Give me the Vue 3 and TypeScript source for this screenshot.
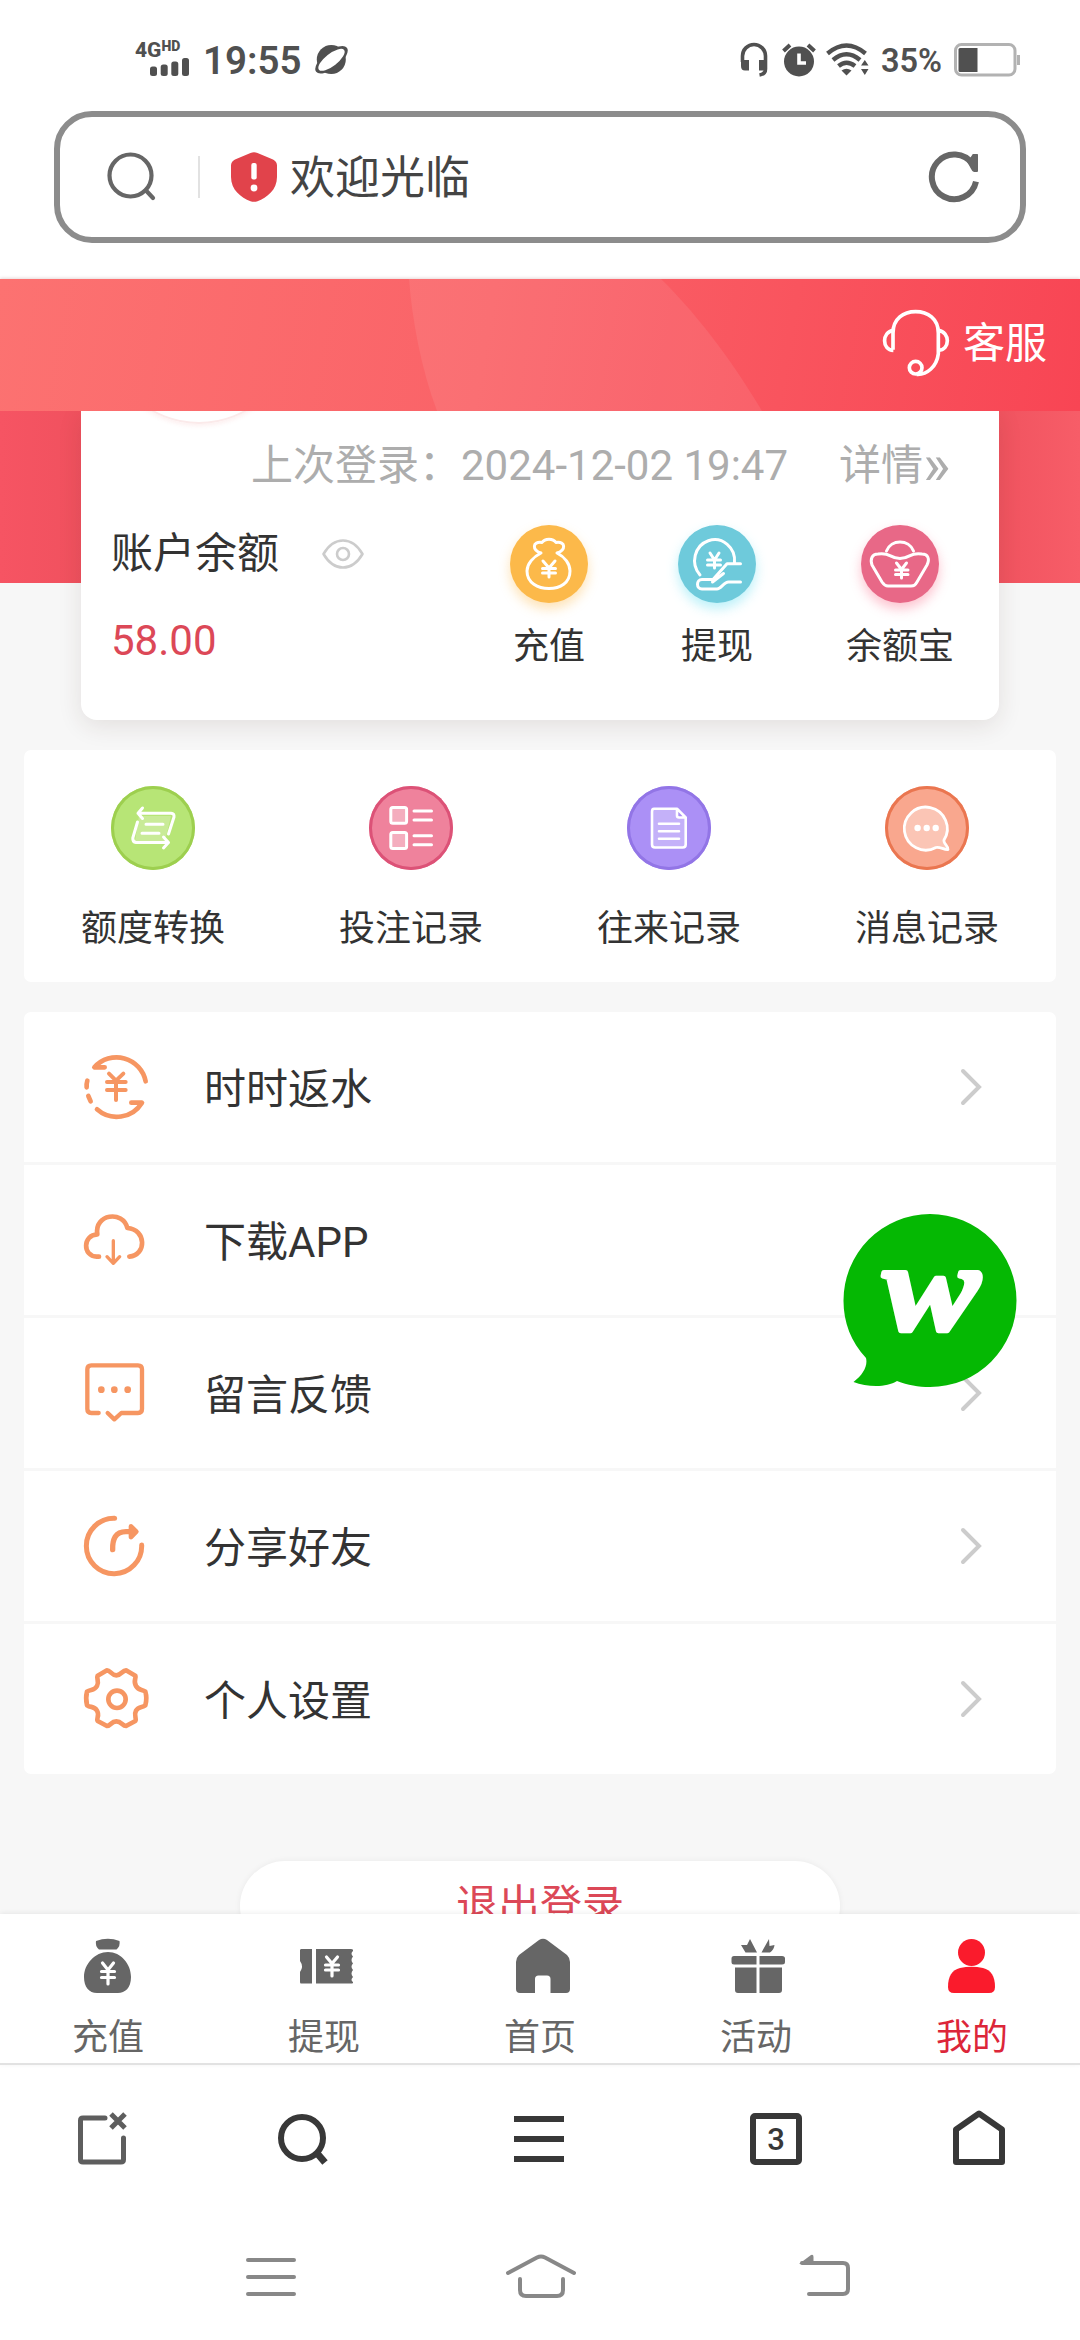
<script setup lang="ts">
interface Item {
  label: string
  icon: string
}

const cardActions: Item[] = [
  { label: '充值', icon: 'bag' },
  { label: '提现', icon: 'hand' },
  { label: '余额宝', icon: 'ingot' },
]

const records: Item[] = [
  { label: '额度转换', icon: 'swap' },
  { label: '投注记录', icon: 'bets' },
  { label: '往来记录', icon: 'doc' },
  { label: '消息记录', icon: 'msg' },
]

const menu: Item[] = [
  { label: '时时返水', icon: 'rebate' },
  { label: '下载APP', icon: 'cloud' },
  { label: '留言反馈', icon: 'feedback' },
  { label: '分享好友', icon: 'share' },
  { label: '个人设置', icon: 'gear' },
]

const tabs: Item[] = [
  { label: '充值', icon: 'bag' },
  { label: '提现', icon: 'ticket' },
  { label: '首页', icon: 'home' },
  { label: '活动', icon: 'gift' },
  { label: '我的', icon: 'user' },
]
</script>

<template>
  <div class="screen">
    <header class="status">
      <div class="signal">
        <div class="network">4G<sup>HD</sup></div>
        <svg width="40" height="20" viewBox="0 0 40 20" fill="#505050">
          <rect x="0" y="10.500" width="7" height="9.500" rx="2.500" />
          <rect x="10.700" y="8.500" width="7" height="11.500" rx="2.500" />
          <rect x="21.300" y="5.500" width="7" height="14.500" rx="2.500" />
          <rect x="32" y="2" width="7" height="18" rx="2.500" />
        </svg>
      </div>
      <span class="time">19:55</span>
      <svg class="planet" width="36" height="36" viewBox="0 0 36 36">
        <circle cx="18.300" cy="17.500" r="14.500" fill="#505050" />
        <ellipse cx="18.500" cy="17.800" rx="19.500" ry="8.500" transform="rotate(-38 18.500 17.800)" fill="#505050" />
        <ellipse cx="18.500" cy="17.800" rx="16" ry="6.200" transform="rotate(-38 18.500 17.800)" fill="#fff" />
      </svg>
      <span class="grow"></span>
      <svg class="phones" width="30" height="36" viewBox="0 0 30 36">
        <path d="M3.500 20 V14 A11.500 11.500 0 0 1 26.500 14 V27 Q26.500 32 20.500 33" fill="none" stroke="#505050" stroke-width="3.600" />
        <path d="M2 18 H10 V28.500 H6 Q2 28.500 2 24 Z M20 18 H28 V28.500 H20 Z" fill="#505050" />
      </svg>
      <svg class="alarm" width="34" height="36" viewBox="0 0 34 36">
        <circle cx="17" cy="19.500" r="15" fill="#505050" />
        <path d="M1.500 9 L8 3 M32.500 9 L26 3" stroke="#505050" stroke-width="4" />
        <path d="M17 11.500 V21 H24" fill="none" stroke="#fff" stroke-width="3.600" />
      </svg>
      <svg class="wifi" width="43" height="36" viewBox="0 0 43 36" fill="none" stroke="#505050" stroke-width="4.400">
        <path d="M1.500 11.500 Q20.500 -4.500 39.500 11.500" />
        <path d="M7 18 Q20.500 6.500 34 18" />
        <path d="M12.500 24 Q20.500 17.500 29 24" />
        <path d="M15.500 28.500 Q20.500 25 25.500 28.500 L20.500 33.500 Z" fill="#505050" stroke="none" />
        <path d="M35 23.500 L38.800 18 L42.500 23.500 Z M35 27 L38.800 33 L42.500 27 Z" fill="#505050" stroke="none" />
      </svg>
      <span class="percent">35%</span>
      <svg class="battery" width="68" height="34" viewBox="0 0 68 34">
        <rect x="1.500" y="1.500" width="59.500" height="30.500" rx="6" fill="#fff" stroke="#b2b2b2" stroke-width="3" />
        <path d="M63 12 H66 V22 H63 Z" fill="#b2b2b2" />
        <path d="M6 5 H23.500 V29 H6 Q4.500 29 4.500 27.500 V6.500 Q4.500 5 6 5 Z" fill="#505050" />
      </svg>
    </header>

    <div class="address-wrap">
      <div class="address">
        <svg width="50" height="50" viewBox="0 0 50 50" fill="none" stroke="#666" stroke-width="4.200" stroke-linecap="round">
          <circle cx="23.500" cy="23.500" r="21" /><path d="M39.500 39 L46 46" />
        </svg>
        <i class="divider"></i>
        <svg class="shield" width="46" height="50" viewBox="0 0 46 50">
          <path d="M19.500 1 Q23 -.5 26.500 1 L42 7.500 Q46 9.500 46 13.500 V25 C46 38 36 45.500 26.500 49.200 Q23 50.500 19.500 49.200 C10 45.500 0 38 0 25 V13.500 Q0 9.500 4 7.500 Z" fill="#e1434b" />
          <rect x="20.300" y="11" width="5.400" height="16.500" rx="2" fill="#fff" /><circle cx="23" cy="36" r="3.400" fill="#fff" />
        </svg>
        <span class="site">欢迎光临</span>
        <svg class="reload" width="56" height="56" viewBox="438 147 168 168">
          <path d="M588 245 A67 67 0 1 1 578 193" fill="none" stroke="#666" stroke-width="18" />
          <path d="M577 164 Q577 162 579 162 H592 Q594 162 594 164 V213 Q594 216 591 216 H582 Q577 216 572 205 L562 186 Z" fill="#666" />
        </svg>
      </div>
    </div>

    <div class="topbar">
      <svg class="wave" width="1080" height="132" viewBox="0 0 1080 132">
        <path d="M409 0 C412 40 421 90 437 132 L762 132 C737 90 702 40 661 0 Z" fill="#fff" fill-opacity=".08" />
      </svg>
      <svg class="support" width="72" height="72" viewBox="300 620 216 216" fill="none" stroke="#fff" stroke-width="11">
        <path d="M339 748 V698 C339 655 371 634 407 634 S475 655 475 698 V760 C470 800 440 824 410 822" />
        <path d="M340 690 C305 694 305 750 340 750 M475 690 C511 694 511 750 475 750" />
        <circle cx="407" cy="802" r="19" />
      </svg>
      <span>客服</span>
    </div>

    <main class="content">
      <section class="account">
        <div class="login">
          <span>上次登录：2024-12-02 19:47</span><span class="more">详情<span class="raquo">»</span></span>
        </div>
        <div class="account-body">
          <div class="balance">
            <div class="balance-title">
              账户余额
              <svg width="44" height="32" viewBox="0 0 44 32" fill="none" stroke="#ccc" stroke-width="2.600">
                <path d="M2.500 16 C13 -2 31 -2 41.500 16 C31 34 13 34 2.500 16 Z" stroke-linejoin="round" />
                <circle cx="22" cy="16" r="6" />
              </svg>
            </div>
            <div class="amount">58.00</div>
          </div>
          <div v-for="a in cardActions" :key="a.label" class="action" :class="a.icon">
            <svg class="disc" width="78" height="78" viewBox="0 0 78 78" fill="none" stroke="#fff" stroke-width="3" stroke-linecap="round" stroke-linejoin="round">
              <template v-if="a.icon === 'bag'">
                <path d="M31 28 C22 25 22 16 32 17.500 C35 13 43 13 46 17.500 C56 16 56 25 47 28 C55 32 60 39 60 46 C60 58 50 63.500 39 63.500 S17 58 17 46 C17 39 23 32 31 28 Z" />
                <path d="M33 36 L39 43 L45 36 M39 43 V52 M32.500 43.500 H45.500 M32.500 48 H45.500" />
              </template>
              <template v-else-if="a.icon === 'hand'">
                <path d="M22 50 A20 21 0 1 1 56.500 38" />
                <path d="M32 28 L36.500 35 L41 28 M36.500 35 V43 M29.500 35 H42.500 M29.500 40 H42.500" />
                <path d="M62.500 38.700 H49 L35 54.500 M45.500 48.500 L34.500 57 M36 54.500 H24 C18 54.500 18 64 24 64 H39 C43 64 46 57 50.500 57 H62.500" />
              </template>
              <template v-else>
                <path d="M25.500 26 C30 14 48 14 52.500 26" />
                <path d="M17 29 C30 27 28 33.500 39 33.500 S48 27 61 29 C67 29 69 34 66 40 L56 57 C54 60.500 53 61 50 61 H27 C24 61 23 60 21 57 L11 40 C9 34 11 29 17 29 Z" />
                <path d="M35.500 38 L40.500 44.500 L45.500 38 M40.500 44.500 V53 M34.500 45 H47 M34.500 49.500 H47" />
              </template>
            </svg>
            <span>{{ a.label }}</span>
          </div>
        </div>
      </section>

      <section class="records">
        <div v-for="r in records" :key="r.label" class="record">
          <svg class="badge" :class="r.icon" width="84" height="84" viewBox="0 0 84 84" fill="none" stroke="#fff" stroke-width="3" stroke-linecap="round" stroke-linejoin="round">
            <template v-if="r.icon === 'swap'">
              <path d="M28 30 H60 L54 55 H24 Z" fill="#fff" fill-opacity=".25" stroke="none" />
              <path d="M31.500 22 L27 27.200 L31.500 32.500 M27 27.200 H60 Q63.500 27.500 63 31 L57.500 48 M26.500 36 L21.800 52 Q21.500 56 25 56.500 H57.500 M52.500 51 L57.500 56.500 L52.500 62 M35 38.300 H52 M31 47.200 H48" />
            </template>
            <template v-else-if="r.icon === 'bets'">
              <rect x="21.800" y="21.500" width="15.800" height="15.800" rx="2" fill="#fff" fill-opacity=".35" />
              <rect x="21.800" y="46.600" width="15.800" height="15.800" rx="2" fill="#fff" fill-opacity=".35" />
              <path d="M45 25 H62.500 M45 34 H62.500 M45 49.700 H62.500 M45 58.700 H62.500" />
            </template>
            <template v-else-if="r.icon === 'doc'">
              <path d="M27 22.700 H50 L58.700 31.500 V58.500 Q58.700 61.500 55.700 61.500 H28 Q25 61.500 25 58.500 V25.700 Q25 22.700 27 22.700 Z M50 23 V29.500 Q50 31.500 52 31.500 H58" fill="#fff" fill-opacity=".3" stroke-width="2.600" />
              <path d="M32 37.700 H52 M32 45.200 H52 M32 52.700 H52" stroke-width="2.600" />
            </template>
            <template v-else>
              <path d="M59 54 A21.500 21.500 0 1 0 51 61.500 C55 60.500 59 64 63 63.500 C63.500 60 58 57.500 59 54 Z" fill="#fff" fill-opacity=".35" stroke-width="2.800" />
              <g fill="#fff" stroke="none"><circle cx="32.600" cy="42" r="3.200" /><circle cx="41.700" cy="42" r="3.200" /><circle cx="50.700" cy="42" r="3.200" /></g>
            </template>
          </svg>
          <span>{{ r.label }}</span>
        </div>
      </section>

      <section class="menu">
        <div v-for="m in menu" :key="m.label" class="row">
          <svg v-if="m.icon === 'rebate'" class="line-icon" viewBox="60 93 216 216">
            <path d="M257 184 A89 89 0 0 0 103 142 H134 M111 268 A89 89 0 0 0 246 248 H214 M82 182 Q79 192 80 202 M85 228 L92 244" />
            <path d="M147 161 L168 182 L190 161 M168 182 V240 M141 186 H197 M141 210 H197" stroke-width="12" />
          </svg>
          <svg v-else-if="m.icon === 'cloud'" class="line-icon" viewBox="60 552 216 216">
            <path d="M117 710 H110 C67 708 68 645 112 643 C102 582 189 570 202 624 C260 628 260 706 208 710" />
            <path d="M160 662 V728 M141 710 L160 730 L179 710" stroke-width="10" />
          </svg>
          <svg v-else-if="m.icon === 'feedback'" class="line-icon" viewBox="60 1011 216 216">
            <path d="M116 1179 H94 Q82 1179 82 1167 V1048 Q82 1036 94 1036 H234 Q246 1036 246 1048 V1167 Q246 1179 234 1179 H184 L163 1198 L143 1179" stroke-width="13" />
            <g fill="#f69662" stroke="none"><circle cx="124" cy="1109" r="10" /><circle cx="163" cy="1109" r="10" /><circle cx="203" cy="1109" r="10" /></g>
          </svg>
          <svg v-else-if="m.icon === 'share'" class="line-icon" viewBox="60 90 216 216">
            <path d="M164 115 A83 83 0 1 0 245 195" stroke-width="15" />
            <path d="M158 209 C157 178 166 155 198 155 H212" stroke-width="16" />
            <path d="M213 139 L229 155 L213 171 Z" fill="#f69662" />
          </svg>
          <svg v-else class="line-icon" viewBox="60 549 216 216">
            <path d="M141 571 C151 571 154 586 169 586 S187 571 198 571 L226 587 C229 595 219 603 228 618 S246 627 256 635 Q262 655 256 676 C248 684 236 677 228 692 S231 713 226 723 L198 738 C187 738 185 724 169 724 S152 738 141 738 L113 723 C108 713 120 707 111 692 S93 684 81 676 Q76 655 81 635 C92 627 103 633 111 618 S108 597 113 587 Z" />
            <circle cx="171" cy="658" r="26" />
          </svg>
          <span>{{ m.label }}</span>
          <svg class="chevron" width="22" height="40" viewBox="0 0 22 40" fill="none" stroke="#ccc" stroke-width="4" stroke-linecap="round">
            <path d="M3 4 L19 20 L3 36" />
          </svg>
        </div>
      </section>

      <button class="logout">退出登录</button>

      <div class="chat">
        <svg width="176" height="176" viewBox="0 0 176 176">
          <path d="M87 0 A86.500 86.500 0 0 1 87 173 C75 173 65 171 54 167 C43 174 24 173 10.500 168 C20 161 25 152 23 144 C8 128 .5 108 .5 87 A86.500 86.500 0 0 1 87 0 Z" fill="#05b803" />
          <text class="chat-letter" transform="translate(40 115.500) scale(1.160 1)" font-size="125">w</text>
        </svg>
      </div>
    </main>

    <nav class="tabs">
      <div v-for="t in tabs" :key="t.label" class="tab" :class="{ active: t.icon === 'user' }">
        <svg width="60" height="60" viewBox="0 0 60 60" fill="currentColor">
          <template v-if="t.icon === 'bag'">
            <path d="M18 5 Q30 .5 41.500 5 Q42.500 10 38.500 13.500 H21 Q17 10 18 5 Z M30 16 C43 16 53 28 53 41 C53 52 47 57 40 57 H19 C11 57 6 51 6 41 C6 28 17 16 30 16 Z" />
            <path d="M24.500 27 L30 34 L35.500 27 M30 34 V48 M23.500 35.500 H36.500 M23.500 41.500 H36.500" fill="none" stroke="#fff" stroke-width="3.200" stroke-linecap="round" />
          </template>
          <template v-else-if="t.icon === 'ticket'">
            <path d="M7 13 H18 V47.500 H7 Q6 47.500 6 46 V36 Q10 30.500 6 25 V14.500 Q6 13 7 13 Z M22 13 H57 Q59.500 13 59 15 Q56 17.500 59 20.500 Q56 24 59 27.500 Q56 30.500 59 34 Q56 37.500 59 41 Q56 44 59 46 Q59.500 47.500 57 47.500 H22 Z" />
            <path d="M32.500 21 L38 27.500 L43.500 21 M38 27.500 V40 M31.500 29 H44.500 M31.500 34 H44.500" fill="none" stroke="#fff" stroke-width="3.200" stroke-linecap="round" />
          </template>
          <path v-else-if="t.icon === 'home'" d="M29 4 Q33 1.500 37 4 L57 19 Q60 22 60 26 V53 Q60 57 56 57 H40.500 V43 Q40.500 39.500 37 39.500 H28.500 Q25 39.500 25 43 V57 H10 Q6 57 6 53 V26 Q6 22 9 19 Z" />
          <path v-else-if="t.icon === 'gift'" d="M8 20 H30.500 V28.500 H8 Q5.500 28.500 5.500 26 V22.500 Q5.500 20 8 20 Z M33.500 20 H56 Q59 20 59 22.500 V26 Q59 28.500 56 28.500 H33.500 Z M9 31.500 H30.500 V57 H12 Q9 57 9 54 Z M33.500 31.500 H56 V54 Q56 57 53 57 H33.500 Z M15 9 L21 9 L24 3 L31 16.500 H19.500 Z M43 3 L43.500 10 L48.500 9 Q48 14 44 16.500 H35.500 Z" />
          <template v-else>
            <circle cx="29.500" cy="16.500" r="13.500" />
            <path d="M18 32 Q29.500 29.500 41 32 C49 34 53 40 53 51 Q53 57 47 57 H12 Q6 57 6 51 C6 40 10 34 18 32 Z" />
          </template>
        </svg>
        <span>{{ t.label }}</span>
      </div>
    </nav>

    <footer class="toolbar">
      <svg width="60" height="60" viewBox="0 0 60 60" fill="none" stroke="#5e5e5e" stroke-width="5">
        <path d="M33 8 H11 Q8.500 8 8.500 10.500 V49.500 Q8.500 52 11 52 H49 Q51.500 52 51.500 49.500 V28" stroke-linecap="round" />
        <path d="M39 4 L53 18 M53 4 L39 18" />
      </svg>
      <svg width="60" height="60" viewBox="0 0 60 60" fill="none" stroke="#383838" stroke-width="6">
        <circle cx="29" cy="28" r="21" /><path d="M43 42 L52 52.500" stroke-width="7" />
      </svg>
      <svg width="60" height="60" viewBox="0 0 60 60" stroke="#383838" stroke-width="6">
        <path d="M5 9 H55 M5 29 H55 M5 49 H55" />
      </svg>
      <span class="tab-count">3</span>
      <svg width="60" height="60" viewBox="0 0 60 60" fill="none" stroke="#383838" stroke-width="6" stroke-linejoin="round">
        <path d="M7 19.500 L30 3.500 L53 19.500 V52 H7 Z" />
      </svg>
    </footer>

    <footer class="system">
      <svg width="54" height="50" viewBox="0 0 54 50"><path d="M4 7 H50 M4 24 H50 M4 41 H50" /></svg>
      <svg width="74" height="50" viewBox="0 0 74 50"><path d="M4 20 L33 4.500 Q37 2.500 41 4.500 L70 20 M16 26 V37 Q16 43 22 43 H53 Q59 43 59 37 V26" /></svg>
      <svg width="54" height="50" viewBox="0 0 54 50"><path d="M11 41 H45 Q50 41 50 36 V15 Q50 10 45 10 H4" /><path d="M1 11 L13 2 Q15.500 1 15.500 4 V11 Z" fill="#888" stroke="none" /></svg>
    </footer>
  </div>
</template>

<style>
body {
  background: #fff;
}
</style>

<style scoped>
.screen {
  display: flex;
  flex-direction: column;
  width: 1080px;
  height: 2340px;
  overflow: hidden;
  background: #fff;
  color: #333;
  font-family: Roboto, "Noto Sans CJK SC", sans-serif;
}
.screen * {
  box-sizing: border-box;
}
svg {
  display: block;
  flex: none;
}
.grow {
  flex: 1;
}

.status {
  display: flex;
  align-items: center;
  flex: none;
  height: 111px;
  padding: 9px 58px 0 134px;
  color: #505050;
  white-space: nowrap;
}
.signal {
  display: flex;
  flex-direction: column;
  width: 60px;
  height: 40px;
}
.signal svg {
  margin: -8px 0 0 16px;
}
.network {
  display: flex;
  align-items: flex-start;
  height: 24px;
  margin-top: -2px;
  margin-bottom: 2px;
  padding-left: 1px;
  font-size: 21px;
  font-weight: 800;
  line-height: 24px;
}
.network sup {
  margin-top: -1px;
  font-size: 14px;
  font-weight: 900;
  line-height: 18px;
}
.time {
  margin-left: 9px;
  font-size: 38.5px;
  font-weight: 600;
}
.planet {
  margin-left: 12px;
}
.alarm {
  margin-left: 13px;
}
.wifi {
  margin-left: 10px;
}
.percent {
  margin: 2px 12px 0 12px;
  font-size: 32.5px;
  font-weight: 600;
}

.address-wrap {
  flex: none;
  height: 168px;
  padding: 0 54px;
}
.address {
  display: flex;
  align-items: center;
  height: 132px;
  padding: 0 38px 0 47px;
  border: 6px solid #8c8c8c;
  border-radius: 38px;
}
.divider {
  width: 2px;
  height: 42px;
  margin: 0 31px 0 41px;
  background: #e2e2e2;
}
.site {
  flex: 1;
  margin-left: 13px;
  padding-top: 4px;
  color: #444;
  font-size: 45px;
  line-height: 60px;
}

.topbar {
  position: relative;
  display: flex;
  align-items: center;
  justify-content: flex-end;
  flex: none;
  height: 132px;
  padding: 0 33px 4px 0;
  background: linear-gradient(100deg, #fc7271 0%, #fa6368 45%, #f84554 100%);
  box-shadow: 0 -1px 3px rgba(120, 40, 40, 0.18);
  color: #fff;
  font-size: 42px;
  line-height: 60px;
}
.topbar span {
  padding-top: 2px;
}
.wave {
  position: absolute;
  top: 0;
  left: 0;
}
.support {
  margin-right: 11px;
}

.content {
  position: relative;
  flex: none;
  height: 1503px;
  overflow: hidden;
  background: linear-gradient(90deg, #f65463, #f0515e 8%, #f0535f 92%, #f75d68) 0 0 / 100% 172px no-repeat #f7f7f7;
}
.account {
  position: relative;
  height: 309px;
  margin: 0 81px;
  border-radius: 0 0 16px 16px;
  background: #fff;
  box-shadow: 0 6px 24px rgba(60, 40, 30, 0.11);
}
.account::before {
  content: "";
  position: absolute;
  top: -177px;
  left: 23px;
  width: 186px;
  height: 186px;
  border: 2px solid #fbeaea;
  border-radius: 50%;
  box-shadow: 0 2px 4px rgba(240, 120, 120, 0.12);
}
.login {
  display: flex;
  height: 111px;
  padding-left: 170px;
  color: #adadad;
  font-size: 42px;
  line-height: 109px;
  white-space: nowrap;
}
.more {
  margin-left: 51px;
}
.raquo {
  font-size: 58px;
  line-height: 0;
  vertical-align: -4px;
}
.account-body {
  display: flex;
}
.balance {
  width: 384px;
  padding-left: 30px;
  font-size: 42px;
}
.balance-title {
  display: flex;
  align-items: center;
  gap: 42px;
  height: 64px;
  line-height: 64px;
}
.amount {
  margin-top: 23px;
  color: #dc4857;
  line-height: 64px;
}
.action {
  display: flex;
  flex-direction: column;
  align-items: center;
  width: 168px;
  padding-top: 3px;
  font-size: 36px;
  line-height: 50px;
}
.action span {
  margin-top: 19px;
}
.action.ingot {
  width: 198px;
}
.disc {
  border-radius: 50%;
}
.bag .disc {
  background: #fcb94a;
  box-shadow: 0 6px 12px rgba(252, 185, 74, 0.4);
}
.hand .disc {
  background: #6ecadb;
  box-shadow: 0 6px 12px rgba(90, 220, 240, 0.4);
}
.ingot .disc {
  background: #e86887;
  box-shadow: 0 6px 12px rgba(250, 104, 135, 0.4);
}

.records {
  display: flex;
  height: 232px;
  margin: 30px 24px 0;
  border-radius: 7px;
  background: #fff;
}
.record {
  display: flex;
  flex: 1;
  flex-direction: column;
  align-items: center;
  padding-top: 36px;
  font-size: 36px;
  line-height: 50px;
}
.record span {
  margin-top: 34px;
}
.badge {
  border-radius: 50%;
}
.badge.swap {
  background: #b7e576;
  box-shadow: inset 0 0 0 3px #9dcf4f;
}
.badge.bets {
  background: #ef829c;
  box-shadow: inset 0 0 0 3px #dc5277;
}
.badge.doc {
  background: #ab90f6;
  box-shadow: inset 0 0 0 3px #9275e6;
}
.badge.msg {
  background: #f9a78e;
  box-shadow: inset 0 0 0 3px #ea7650;
}

.menu {
  margin: 30px 24px 0;
  border-radius: 7px;
  background: #fff;
}
.row {
  display: flex;
  align-items: center;
  height: 153px;
  padding: 0 74px 0 56px;
  border-bottom: 3px solid #f7f7f7;
  font-size: 42px;
  line-height: 60px;
}
.row:last-child {
  height: 150px;
  border-bottom: 0;
}
.row span {
  flex: 1;
  padding: 6px 0 0 52px;
}
.line-icon {
  width: 72px;
  height: 72px;
  fill: none;
  stroke: #f69662;
  stroke-width: 14;
  stroke-linecap: round;
  stroke-linejoin: round;
}

.logout {
  display: block;
  width: 600px;
  height: 90px;
  margin: 87px auto 0;
  padding: 0;
  border: 0;
  border-radius: 45px;
  background: #fff;
  box-shadow: 0 0 6px rgba(0, 0, 0, 0.06);
  color: #dc4857;
  font: inherit;
  font-size: 42px;
  line-height: 90px;
}
.chat {
  position: absolute;
  top: 803px;
  left: 843px;
}
.chat-letter {
  fill: #fff;
  stroke: #fff;
  stroke-width: 4.5;
  stroke-linejoin: round;
  font-family: "Liberation Serif", serif;
  font-style: italic;
  font-weight: 700;
}

.tabs {
  position: relative;
  display: flex;
  flex: none;
  height: 151px;
  border-bottom: 2px solid #e2e2e2;
  background: #fff;
  box-shadow: 0 -1px 5px rgba(0, 0, 0, 0.07);
}
.tab {
  display: flex;
  flex: 1;
  flex-direction: column;
  align-items: center;
  padding-top: 22px;
  color: #666;
  font-size: 36px;
  line-height: 50px;
}
.tab span {
  margin-top: 17px;
}
.tab.active {
  color: #fa1b2c;
}
.tab.active span {
  color: #dc2639;
}

.toolbar {
  display: grid;
  grid-template-columns: 204px 198px 274px 200px 206px;
  flex: none;
  align-items: start;
  justify-items: center;
  height: 187px;
  padding-top: 45px;
}
.tab-count {
  width: 52px;
  height: 52px;
  margin-top: 3px;
  border: 6px solid #383838;
  border-radius: 5px;
  color: #383838;
  font-size: 31px;
  font-weight: 500;
  line-height: 41px;
  text-align: center;
}
.system {
  display: flex;
  align-items: flex-start;
  gap: 233px;
  padding: 1px 0 0 244px;
}
.system svg {
  fill: none;
  stroke: #888;
  stroke-width: 4;
  stroke-linecap: round;
}
.system svg:nth-child(2) {
  margin-left: -27px;
}
.system svg:nth-child(3) {
  margin-left: -13px;
}
</style>
